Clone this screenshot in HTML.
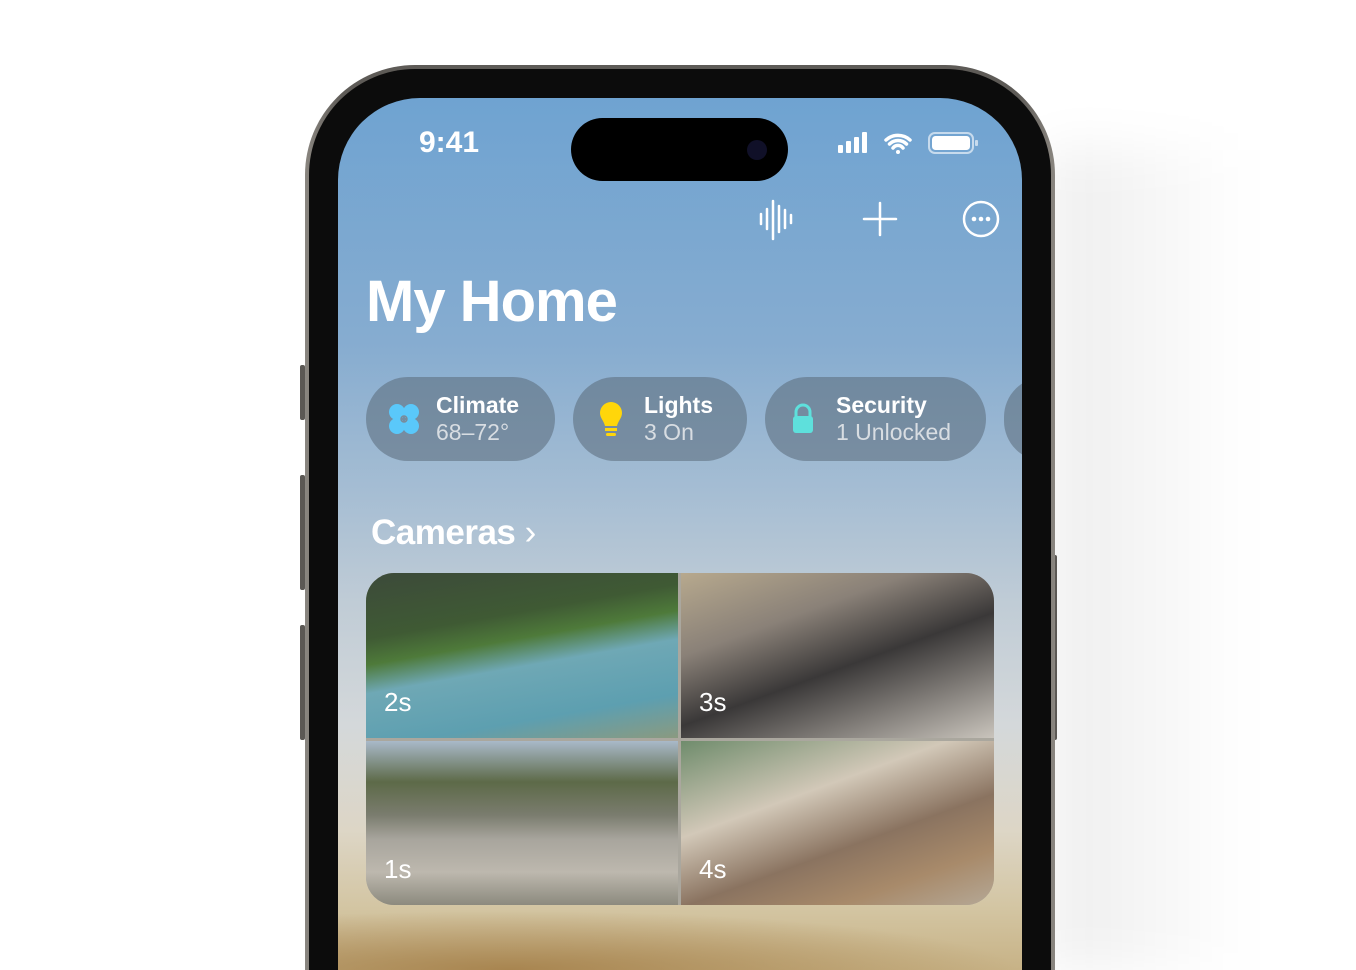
<!DOCTYPE html>
<html><head><style>
html,body{margin:0;width:1356px;height:970px;overflow:hidden}
body{background:#fff;position:relative;font-family:"Liberation Sans",sans-serif}
.wrap{position:absolute;left:0;top:0;width:1356px;height:970px;overflow:hidden}
.shadow{position:absolute;left:1050px;top:150px;width:200px;height:820px;background:linear-gradient(90deg,rgba(0,0,0,.07),rgba(0,0,0,0));filter:blur(25px)}
.frame{position:absolute;left:305px;top:65px;width:750px;height:905px;border-radius:110px 110px 0 0;background:linear-gradient(90deg,#8a8680,#5e5b57 5%,#5e5b57 95%,#8a8680);}
.frame2{position:absolute;left:309px;top:69px;width:742px;height:901px;border-radius:106px 106px 0 0;background:#0c0c0c;}
.screen{position:absolute;left:338px;top:98px;width:684px;height:872px;border-radius:82px 82px 0 0;overflow:hidden;
background:linear-gradient(180deg,#6fa3d1 0%,#86acd0 28%,#a5bdd3 45%,#c0ccd6 58%,#d4d8da 72%,#ddd6c6 84%,#d3c5a2 93%,#c7b286 100%)}
.btn{position:absolute;background:#5b5854;width:5px;border-radius:2px}
.island{position:absolute;left:233px;top:20px;width:217px;height:63px;border-radius:32px;background:#000}
.t{position:absolute;color:#fff}
.pill{position:absolute;top:279px;height:84px;border-radius:42px;background:rgba(90,105,120,.55)}
.pill .a{position:absolute;top:15px;font-size:23px;font-weight:bold;color:#fff}
.pill .b{position:absolute;top:42px;font-size:23px;color:#d8dde2}
.cams{position:absolute;left:28px;top:475px;width:628px;height:332px;border-radius:28px;overflow:hidden;background:#aaa79e}
.c{position:absolute}
.c span{position:absolute;left:18px;bottom:20px;color:#fff;font-size:26px}
</style></head><body><div class="wrap">
<div class="shadow"></div>
<div class="btn" style="left:300px;top:365px;height:55px"></div>
<div class="btn" style="left:300px;top:475px;height:115px"></div>
<div class="btn" style="left:300px;top:625px;height:115px"></div>
<div class="btn" style="left:1052px;top:555px;height:185px"></div>
<div class="frame"></div><div class="frame2"></div>
<div class="screen">
 <div class="t" style="left:81px;top:28px;font-size:30px;font-weight:bold">9:41</div>
 <div class="island"><div style="position:absolute;left:176px;top:22px;width:20px;height:20px;border-radius:50%;background:#101028"></div></div>
 <svg style="position:absolute;left:498px;top:32px" width="145" height="26">
  <rect x="2" y="15" width="5" height="8" rx="1" fill="#fff"/><rect x="10" y="11" width="5" height="12" rx="1" fill="#fff"/><rect x="18" y="7" width="5" height="16" rx="1" fill="#fff"/><rect x="26" y="2" width="5" height="21" rx="1" fill="#fff"/>
  <path d="M50 10a18 18 0 0 1 24 0M53.5 14a12 12 0 0 1 17 0M57 18a6 6 0 0 1 10 0" stroke="#fff" stroke-width="3.5" fill="none" stroke-linecap="round"/><circle cx="62" cy="22" r="2" fill="#fff"/>
  <rect x="93" y="3" width="44" height="20" rx="6" fill="none" stroke="rgba(255,255,255,.6)" stroke-width="2"/><rect x="96" y="6" width="38" height="14" rx="3.5" fill="#fff"/><rect x="139" y="10" width="3" height="6" rx="1" fill="rgba(255,255,255,.6)"/>
 </svg>
 <svg style="position:absolute;left:420px;top:100px" width="250" height="44" stroke="#fff" stroke-width="2.5" fill="none" stroke-linecap="round">
  <path d="M3 16v10M9 11v20M15 3v38M21 8v26M27 12v18M33 17v8"/>
  <path d="M122 5v32M106 21h32"/>
  <circle cx="223" cy="21" r="17"/><g fill="#fff" stroke="none"><circle cx="216" cy="21" r="2.3"/><circle cx="223" cy="21" r="2.3"/><circle cx="230" cy="21" r="2.3"/></g>
 </svg>
 <div class="t" style="left:28px;top:170px;font-size:58px;font-weight:bold;letter-spacing:-1px">My Home</div>
 <div class="pill" style="left:28px;width:189px"><svg style="position:absolute;left:22px;top:26px" width="32" height="32"><g fill="#5ac8fa"><ellipse cx="9" cy="9" rx="8" ry="8"/><ellipse cx="23" cy="9" rx="8" ry="8"/><ellipse cx="9" cy="23" rx="8" ry="8"/><ellipse cx="23" cy="23" rx="8" ry="8"/></g><circle cx="16" cy="16" r="3" fill="none" stroke="#7a8a98" stroke-width="1.5"/></svg><div class="a" style="left:70px">Climate</div><div class="b" style="left:70px">68–72°</div></div>
 <div class="pill" style="left:235px;width:174px"><svg style="position:absolute;left:26px;top:24px" width="24" height="38"><path d="M12 1a11 11 0 0 0-11 11c0 5 4 8 5 13h12c1-5 5-8 5-13A11 11 0 0 0 12 1z" fill="#ffd60a"/><rect x="6" y="27" width="12" height="3" fill="#ffd60a"/><rect x="7" y="32" width="10" height="3" rx="1.5" fill="#ffd60a"/></svg><div class="a" style="left:71px">Lights</div><div class="b" style="left:71px">3 On</div></div>
 <div class="pill" style="left:427px;width:221px"><svg style="position:absolute;left:26px;top:26px" width="24" height="32"><path d="M5 14V9a7 7 0 0 1 14 0v5" stroke="#5ee0dc" stroke-width="3" fill="none"/><rect x="2" y="13" width="20" height="17" rx="3" fill="#5ee0dc"/></svg><div class="a" style="left:71px">Security</div><div class="b" style="left:71px">1 Unlocked</div></div>
 <div class="pill" style="left:666px;width:80px"></div>
 <div class="t" style="left:33px;top:415px;font-size:35px;font-weight:bold;letter-spacing:-0.5px">Cameras <span style="font-weight:normal">›</span></div>
 <div class="cams">
  <div class="c" style="left:0;top:0;width:312px;height:165px;background:linear-gradient(170deg,#3c4a3a 0%,#3f5a34 30%,#4e7a3a 42%,#6fa8b5 55%,#5d9fb0 80%,#8a9a80 100%)"><span>2s</span></div>
  <div class="c" style="left:315px;top:0;width:313px;height:165px;background:linear-gradient(160deg,#b7a98e 0%,#8a8178 30%,#3a3838 55%,#7a7672 75%,#c9c4bc 100%)"><span>3s</span></div>
  <div class="c" style="left:0;top:168px;width:312px;height:164px;background:linear-gradient(180deg,#a9b9c9 0%,#5d6a48 25%,#7a7c6e 45%,#a8a59d 60%,#bdb8ae 80%,#8c8a7e 100%)"><span>1s</span></div>
  <div class="c" style="left:315px;top:168px;width:313px;height:164px;background:linear-gradient(160deg,#6f8c6c 0%,#d2c8b8 35%,#8a7360 60%,#a88a6a 80%,#b5a896 100%)"><span>4s</span></div>
 </div>
 <div style="position:absolute;left:0;top:812px;width:684px;height:60px;background:radial-gradient(ellipse at 25% 100%,#a88550 0%,rgba(200,180,140,0) 70%)"></div>
</div>
</div></body></html>
